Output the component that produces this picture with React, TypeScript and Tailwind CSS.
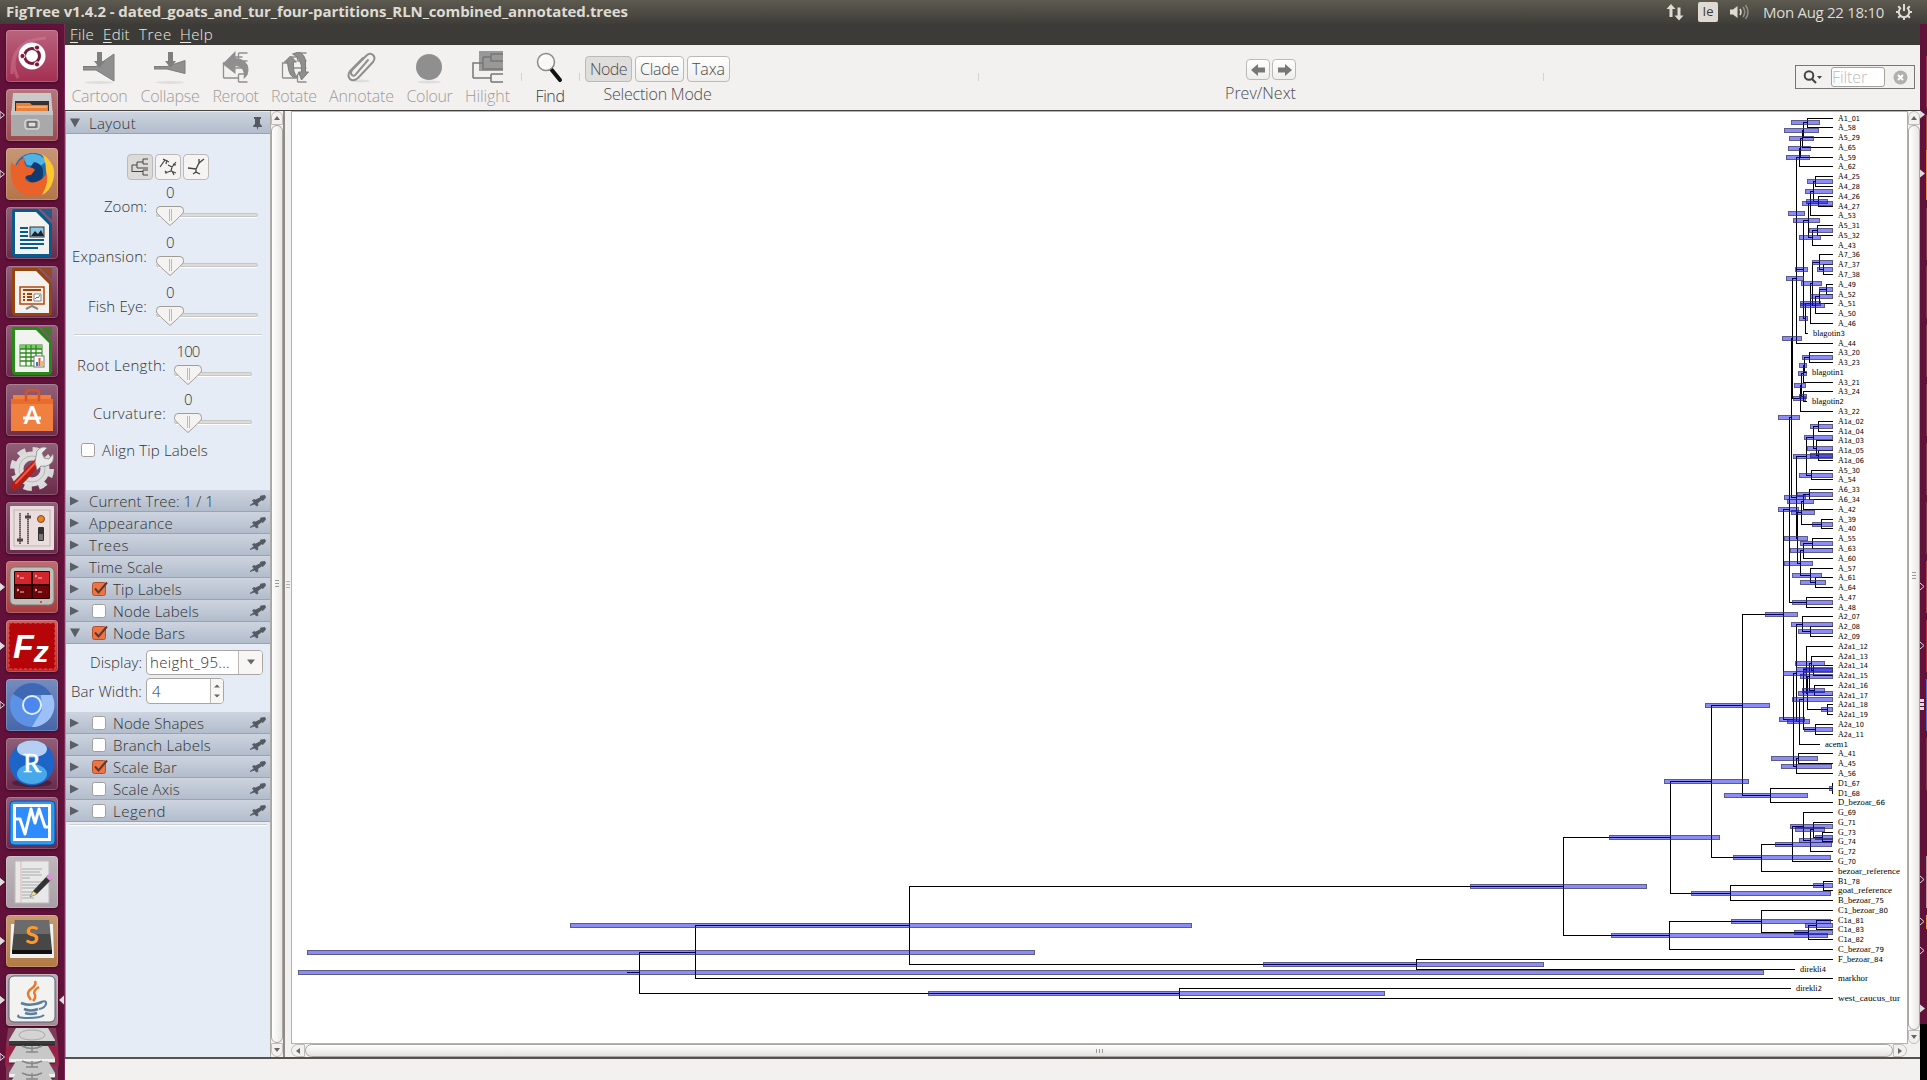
import { useLayoutEffect, useRef, type ReactNode } from "react";

/* Text spread over a fixed width by adjusting its letter spacing. */
function Fit({ w, children, className = "" }: { w: number; children: string; className?: string }) {
  const ref = useRef<HTMLSpanElement>(null);
  useLayoutEffect(() => {
    const el = ref.current;
    if (!el) return;
    el.style.letterSpacing = "0px";
    const natural = el.getBoundingClientRect().width;
    el.style.letterSpacing = `${(w - natural) / children.length}px`;
  }, [w, children]);
  return (
    <span ref={ref} className={`inline-block whitespace-pre ${className}`}>
      {children}
    </span>
  );
}

/* ---------- phylogenetic tree ---------- */

type Clade = string | [number, number, number, Clade, Clade];

const goats: Clade = [1742, 1705, 1770,
  [1783, 1765, 1798,
    [1789, 1778, 1799,
      [1791, 1778, 1800,
        [1792, 1782, 1802,
          [1796, 1786, 1804,
            [1796, 1788, 1805,
              [1799, 1786, 1810,
                [1800, 1788, 1811,
                  [1802, 1789, 1814, [1803, 1784, 1819, [1807, 1791, 1820, "A1_01", "A_58"], "A5_29"], "A_65"],
                  "A_59"],
                "A_62"],
              [1803, 1795, 1808,
                [1808, 1793, 1820,
                  [1810, 1802, 1833,
                    [1813, 1805, 1833, [1815, 1807, 1833, "A4_25", "A4_28"], [1818, 1806, 1828, "A4_26", "A4_27"]],
                    "A_53"],
                  [1812, 1799, 1821, [1817, 1809, 1833, "A5_31", "A5_32"], "A_43"]],
                [1805, 1799, 1808,
                  [1810, 1800, 1821,
                    [1812, 1801, 1822,
                      [1819, 1812, 1833, "A7_36", [1823, 1817, 1833, "A7_37", "A7_38"]],
                      [1815, 1800, 1825,
                        [1819, 1810, 1833, [1826, 1819, 1833, "A_49", "A_52"], "A_51"],
                        "A_50"]],
                    "A_46"],
                  "blagotin3"]]],
            "A_44"],
          [1800, 1793, 1806,
            [1801, 1794, 1806,
              [1803, 1798, 1807, [1804, 1799, 1807, [1809, 1802, 1833, "A3_20", "A3_23"], "blagotin1"], "A3_21"],
              [1803, 1799, 1807, "A3_24", "blagotin2"]],
            "A3_22"]],
        [1796, 1784, 1806,
          [1806, 1793, 1833,
            [1813, 1804, 1833,
              [1818, 1810, 1833, "A1a_02", "A1a_04"],
              [1816, 1807, 1833, "A1a_03", [1818, 1810, 1833, "A1a_05", "A1a_06"]]],
            [1811, 1799, 1833, "A5_30", "A_54"]],
          [1797, 1784, 1808,
            [1801, 1791, 1815,
              [1803, 1787, 1814, [1809, 1797, 1833, "A6_33", "A6_34"], "A_42"],
              [1821, 1812, 1833, "A_39", "A_40"]],
            [1800, 1784, 1813,
              [1803, 1790, 1833, [1812, 1800, 1833, "A_55", "A_63"], "A_60"],
              [1810, 1792, 1822, "A_57", [1815, 1800, 1826, "A_61", "A_64"]]]]]],
      [1806, 1792, 1833, "A_47", "A_48"]],
    [1793, 1779, 1805,
      [1796, 1783, 1807,
        [1802, 1791, 1833, "A2_07", [1810, 1798, 1833, "A2_08", "A2_09"]],
        [1799, 1787, 1810,
          [1803, 1792, 1833,
            [1806, 1796, 1833,
              "A2a1_12",
              [1807, 1798, 1833,
                [1809, 1800, 1833,
                  [1811, 1795, 1825, "A2a1_13", [1813, 1803, 1833, "A2a1_14", "A2a1_15"]],
                  [1814, 1802, 1825, "A2a1_16", "A2a1_17"]],
                [1827, 1821, 1833, "A2a1_18", "A2a1_19"]]],
            [1815, 1804, 1833, "A2a_10", "A2a_11"]],
          "acem1"]],
      [1796, 1781, 1832, [1798, 1771, 1818, "A_41", "A_45"], "A_56"]]],
  [1770, 1724, 1808, [1832, 1829, 1833, "D1_67", "D1_68"], "D_bezoar_66"]];

const bezoars: Clade = [1563, 1470, 1647,
  [1670, 1609, 1720,
    [1711, 1664, 1749,
      goats,
      [1761, 1733, 1831,
        [1792, 1775, 1832,
          [1803, 1790, 1833,
            "G_69",
            [1810, 1799, 1833, [1813, 1795, 1825, "G_71", [1822, 1815, 1833, "G_73", "G_74"]], "G_72"]],
          "G_70"],
        "bezoar_reference"]],
    [1730, 1691, 1831, [1823, 1813, 1833, "B1_78", "goat_reference"], "B_bezoar_75"]],
  [1669, 1611, 1828,
    [1761, 1731, 1831,
      "C1_bezoar_80",
      [1808, 1794, 1833, [1816, 1805, 1833, "C1a_81", "C1a_83"], "C1a_82"]],
    "C_bezoar_79"]];

const root: Clade = [639, 298, 1764,
  [695, 307, 1035,
    [909, 570, 1192, bezoars, [1416, 1263, 1544, "F_bezoar_84", "direkli4"]],
    "markhor"],
  [1179, 928, 1385, "direkli2", "west_caucus_tur"]];

const tipX: Record<string, number> = {
  blagotin1: 1807, blagotin2: 1807, blagotin3: 1808, acem1: 1820, direkli4: 1795, direkli2: 1791,
};

const labelWidth: Record<string, number> = {
  D_bezoar_66: 47, bezoar_reference: 62, goat_reference: 54, B_bezoar_75: 46, C_bezoar_79: 46, F_bezoar_84: 45,
  C1_bezoar_80: 50, markhor: 30, direkli4: 26, direkli2: 26, west_caucus_tur: 62, blagotin1: 32, blagotin2: 32,
  blagotin3: 32, acem1: 23,
};
const widthByLength = [0, 0, 0, 0, 18, 22, 26, 30];

function TreeDrawing() {
  const lines: [number, number, number, number][] = [];
  const bars: [number, number, number][] = [];
  const tips: [string, number, number][] = [];
  const walk = (c: Clade, from: number): number => {
    if (typeof c === "string") {
      const y = 118.05 + 9.782 * tips.length;
      const end = tipX[c] ?? 1833;
      tips.push([c, end + 5, Math.floor(y)]);
      lines.push([from, Math.floor(y), end - from, 1]);
      return y;
    }
    const [x, b1, b2, top, bottom] = c;
    const y1 = walk(top, x);
    const y2 = walk(bottom, x);
    const y = (y1 + y2) / 2;
    lines.push([x, Math.floor(y1), 1, Math.floor(y2) - Math.floor(y1) + 1]);
    lines.push([from, Math.floor(y), x - from, 1]);
    bars.push([b1, b2, Math.floor(y)]);
    return y;
  };
  walk(root, 627);
  return (
    <svg width="1615" height="931" viewBox="292 112 1615 931" className="block">
      {lines.map(([x, y, w, h], i) => (
        <rect key={i} x={x} y={y} width={w} height={h} fill="#000" shapeRendering="crispEdges" />
      ))}
      {bars.map(([a, b, y], i) => (
        <g key={i}>
          <rect x={a} y={y - 2} width={b - a} height="5" fill="#0000eb" fillOpacity=".45" />
          <rect x={a + 0.5} y={y - 1.5} width={b - a - 1} height="4" fill="none" stroke="#3c3c3c" strokeOpacity=".6" />
        </g>
      ))}
      {tips.map(([t, x, y]) => (
        <text key={t} x={x} y={y + 3} textLength={labelWidth[t] ?? widthByLength[t.length]}
          lengthAdjust="spacingAndGlyphs" fontSize="8.5" fontFamily="'Liberation Serif', serif" fill="#000">
          {t.split(/(\d+)/).map((part, i) =>
            /\d/.test(part)
              ? <tspan key={i} fontFamily="'DejaVu Sans', sans-serif" fontSize="7">{part}</tspan>
              : part,
          )}
        </text>
      ))}
    </svg>
  );
}

/* ---------- launcher ---------- */

function Doc({ color, children }: { color: string; children: ReactNode }) {
  return (
    <g>
      <path d="M8 2h24l14 15v29a4 4 0 0 1-4 4H10a4 4 0 0 1-4-4V4a2 2 0 0 1 2-2z" fill={color} />
      <path d="M9 5h21l13 13v29H9z" fill="#f2f2f0" />
      <path d="M34 2h12v11z" fill={color} opacity=".75" />
      {children}
    </g>
  );
}

const launcher: { bg: string; mark?: "open" | "full"; active?: boolean; art: ReactNode }[] = [
  { bg: "bg-[#a33052]", art: (
    <g>
      <path d="M6 44Q4 10 40 8M12 48Q0 24 24 10" fill="none" stroke="#d98aa0" strokeWidth="3" opacity=".4" />
      <circle cx="26" cy="26" r="13.5" fill="#fff" />
      <circle cx="26" cy="26" r="7.5" fill="none" stroke="#7c1a3a" strokeWidth="3" />
      <circle cx="16.500" cy="26" r="2.600" fill="#7c1a3a" stroke="#fff" />
      <circle cx="31" cy="17.600" r="2.600" fill="#7c1a3a" stroke="#fff" />
      <circle cx="31" cy="34.400" r="2.600" fill="#7c1a3a" stroke="#fff" />
    </g>) },
  { bg: "bg-[#9c4a50]", mark: "open", art: (
    <g>
      <path d="M7 4h38l2 24H5z" fill="#c9c9c9" />
      <path d="M9 12h34v12H9z" fill="#3a3030" />
      <path d="M10 14h14l2 2h16v6H10z" fill="#e87f3a" />
      <path d="M11 18h30" stroke="#f8d8a0" />
      <path d="M5 22h42v25H5z" fill="#a9a9a9" />
      <path d="M5 22h42v4H5z" fill="#c4c4c4" />
      <rect x="19" y="31" width="14" height="9" rx="2" fill="#a0a0a0" stroke="#eee" />
      <rect x="22" y="33" width="8" height="5" fill="#ddd" stroke="#444" />
    </g>) },
  { bg: "bg-[#b5744a]", mark: "open", art: (
    <g>
      <circle cx="27" cy="24" r="19" fill="#1f6fb5" />
      <path d="M17 9q12-8 24 4l-8 6-12-2z" fill="#4fb3e6" />
      <path d="M28 14q12 2 8 18l-10 4-8-8z" fill="#123a72" />
      <path d="M5 14q3 4 6 3 2-6 8-7-2 6 2 9 6 0 8 3l-4 5q-6 0-6 4 6 7 17 0 9-8 3-22 9 5 9 16a21 21 0 0 1-43 3Q4 20 5 14z" fill="#e8622a" />
      <path d="M36 6q16 10 11 27-3 10-11 14 8-14 4-24 0-10-4-17z" fill="#fbc62f" />
    </g>) },
  { bg: "bg-[#6b2a4b]", art: (
    <Doc color="#0b5a8c">
      <rect x="24" y="20" width="14" height="10" fill="#8cc7ea" stroke="#333" />
      <path d="M25 29l4-5 3 3 3-4 3 6z" fill="#222" />
      <path d="M14 21h8M14 25h8M14 29h8M14 33h24M14 37h24M14 41h18" stroke="#0b5a8c" strokeWidth="2" />
    </Doc>) },
  { bg: "bg-[#6b2a4b]", art: (
    <Doc color="#96450f">
      <rect x="14" y="21" width="24" height="17" fill="#fbe9dc" stroke="#b04a10" strokeWidth="1.500" />
      <path d="M17 24h18M17 28h2M21 28h5M17 31h2M21 31h5M17 34h2M21 34h5" stroke="#96450f" strokeWidth="2" />
      <path d="M28 28h7v7h-7z" fill="#fff" stroke="#888" />
      <path d="M29 33l2-2 1 1 2-3" stroke="#3a9a3a" fill="none" />
      <path d="M26 38v2l-6 3M26 40l6 3" stroke="#888" strokeWidth="2" fill="none" />
    </Doc>) },
  { bg: "bg-[#6b2a4b]", art: (
    <Doc color="#258a16">
      <rect x="14" y="20" width="22" height="21" fill="#fff" stroke="#2a8a1a" />
      <path d="M14 20h22v4H14z" fill="#7cc86a" />
      <path d="M14 24h22M14 28h22M14 32h22M14 36h22M20 20v21M25 20v21M30 20v21" stroke="#2a8a1a" strokeWidth="1.300" />
      <rect x="28" y="31" width="10" height="11" fill="#fff" stroke="#777" />
      <path d="M31 37v4" stroke="#2a7ad0" strokeWidth="2" /><path d="M33.500 33v8" stroke="#e05a1a" strokeWidth="2" /><path d="M36 36v5" stroke="#f0a030" strokeWidth="1.500" />
    </Doc>) },
  { bg: "bg-[#6f2d4c]", art: (
    <g>
      <path d="M7 11h38v4h2v32H5V15h2z" fill="#f08040" />
      <path d="M5 15h42v5H5z" fill="#e86c2c" />
      <path d="M20 17V10q0-4 4-4h5q4 0 4 4v7" fill="none" stroke="#d0552a" strokeWidth="2.500" />
      <text x="26" y="40" textAnchor="middle" fontSize="24" fontWeight="700" fontFamily="Lato, sans-serif" fill="#fff">A</text>
      <path d="M17 34h18" stroke="#fff" strokeWidth="3" />
    </g>) },
  { bg: "bg-[#6b2a4b]", art: (
    <g>
      <circle cx="26" cy="26" r="18" fill="none" stroke="#d8d8d8" strokeWidth="8" strokeDasharray="7.500 6.640" />
      <circle cx="26" cy="26" r="13" fill="none" stroke="#dcdcdc" strokeWidth="9" />
      <circle cx="26" cy="26" r="13" fill="none" stroke="#b9b9b9" />
      <path d="M9 43L32 19" stroke="#b51d17" strokeWidth="8" strokeLinecap="round" />
      <path d="M10 40L30 19" stroke="#ef5b4a" strokeWidth="2" strokeLinecap="round" />
      <path d="M29 19l2-11q5-6 10-3l-5 5 2 5 5 1 4-5q2 7-4 11-4 2-8 1l-4 4z" fill="#e8e8e8" stroke="#888" strokeWidth=".8" />
    </g>) },
  { bg: "bg-[#6b2a4b]", art: (
    <g>
      <rect x="4" y="4" width="44" height="44" rx="1" fill="#e9dedd" />
      <rect x="8" y="8" width="36" height="36" fill="none" stroke="#c4b2b2" />
      <path d="M14 11v31M22 11v31" stroke="#877" strokeWidth="2" strokeDasharray="1 1" />
      <path d="M14 11v31M22 11v31" stroke="#544" />
      <path d="M11 38h6M19 15h6" stroke="#544" strokeWidth="3" />
      <circle cx="35" cy="17" r="3.500" fill="#f08020" stroke="#7a4a30" />
      <rect x="32" y="25" width="6" height="14" rx="1" fill="#333" /><rect x="33" y="32" width="4" height="6" fill="#777" />
    </g>) },
  { bg: "bg-[#a83c40]", mark: "full", art: (
    <g>
      <rect x="4" y="6" width="44" height="38" rx="5" fill="#bfc0bb" stroke="#777" />
      <rect x="8" y="10" width="36" height="28" rx="1" fill="#2a0505" />
      <path d="M9 11h16v12H9zM27 11h16v12H27z" fill="#d3262c" />
      <path d="M9 25h16v12H9zM27 25h16v12H27z" fill="#6e0508" />
      <path d="M11 14l2 1-2 1M14 17h4M29 14l2 1-2 1M32 17h4M11 28l2 1-2 1M14 31h4M29 28l2 1-2 1M32 31h4" stroke="#fdd" fill="none" strokeWidth=".9" />
      <circle cx="35" cy="41" r="1" fill="#e22" />
    </g>) },
  { bg: "bg-[#b82a2c]", mark: "full", art: (
    <g>
      <rect x="3" y="3" width="46" height="46" fill="#b50508" stroke="#d55" strokeDasharray="3 2" />
      <text x="7" y="38" fontWeight="700" fontStyle="italic" fontFamily="'Liberation Sans', sans-serif" fill="#fff">
        <tspan fontSize="34">F</tspan><tspan fontSize="30" dy="4">z</tspan>
      </text>
    </g>) },
  { bg: "bg-[#4766a8]", mark: "open", art: (
    <g>
      <circle cx="26" cy="26" r="22" fill="#5c92e6" />
      <path d="M26 26L7 15A22 22 0 0 1 45 15L45 16H26z" fill="#3f68b4" />
      <path d="M35 16h11a22 22 0 0 1-20 32L36 31z" fill="#9cc0f8" />
      <circle cx="26" cy="26" r="10" fill="#e4eefe" />
      <circle cx="26" cy="26" r="8" fill="#4a87ee" />
    </g>) },
  { bg: "bg-[#6b2a4b]", art: (
    <g>
      <ellipse cx="26" cy="45" rx="20" ry="4" fill="#2a1030" opacity=".5" />
      <circle cx="26" cy="25" r="22.500" fill="#1d66c8" />
      <ellipse cx="26" cy="36" rx="15" ry="10" fill="#55c0f4" opacity=".75" />
      <ellipse cx="26" cy="11" rx="15" ry="8.500" fill="#cfe2f8" opacity=".85" />
      <text x="26" y="34" textAnchor="middle" fontSize="27" fontFamily="'Liberation Serif', serif" fill="#fff" stroke="#fff" strokeWidth=".6">R</text>
    </g>) },
  { bg: "bg-[#6b2a4b]", art: (
    <g>
      <rect x="4" y="4" width="45" height="44" rx="4" fill="#2a9df0" stroke="#0a4ab4" />
      <rect x="8.500" y="8.500" width="35" height="34" fill="#2f8cff" stroke="#fff" strokeWidth="3" />
      <path d="M8 22h6l5 15 6-25 4 14 4-14 6 18h6" fill="none" stroke="#fff" strokeWidth="3" strokeLinejoin="round" />
    </g>) },
  { bg: "bg-[#aa9fa6]", mark: "full", art: (
    <g>
      <rect x="9" y="5" width="34" height="42" fill="#e8e8e8" stroke="#bbb" />
      <path d="M15 5v42" stroke="#e9b0b0" />
      <path d="M16 13h20M16 16h18M16 19h20M16 22h8M16 26h20M16 29h20M16 32h14M16 36h16M16 39h10M16 42h12" stroke="#aaa" />
      <path d="M27 35L42 19l4 4L31 38z" fill="#333" />
      <path d="M40 21l4-4 4 4-4 4z" fill="#d795d5" /><path d="M24 41l3-6 4 3z" fill="#f0e090" stroke="#555" strokeWidth=".5" />
    </g>) },
  { bg: "bg-[#b27a45]", mark: "full", art: (
    <g>
      <path d="M5 9h42l1 34H4z" fill="#f2f2f2" />
      <path d="M9 5h34l3 30q0 4-3 4H9q-3 0-3-4z" fill="#474747" />
      <path d="M9 5h34l1 14H8z" fill="#7a7a7a" opacity=".7" /><path d="M6 35h40v4H6z" fill="#111" />
      <text x="26" y="29" textAnchor="middle" fontSize="25" fontWeight="700" fontFamily="Lato, sans-serif" fill="#ff9a2a">S</text>
    </g>) },
  { bg: "bg-[#a98a92]", mark: "full", active: true, art: (
    <g>
      <rect x="3" y="2" width="46" height="46" rx="5" fill="#f2f2f0" stroke="#4e647c" />
      <path d="M29 7q2 4-4 8t0 11M33 13q-7 4-4 8 1 3-2 6" fill="none" stroke="#e8792c" strokeWidth="2.500" />
      <path d="M15 29q10 4 21-1M18 35q7 3 14 0M19 39q6 2 12 0" fill="none" stroke="#5a7f9e" strokeWidth="2.500" />
      <path d="M35 28q6-2 5 2t-7 5M13 41q-4 3 9 3t16-3" fill="none" stroke="#5a7f9e" strokeWidth="2" />
    </g>) },
];

function Launcher() {
  return (
    <aside className="relative h-[1056px] w-[65px] shrink-0 overflow-hidden border-r border-[#7d2c58] bg-[#62113a] pt-[6px]">
      <div className="flex flex-col gap-[7px]">
        {launcher.map((it, i) => (
          <div key={i} className="flex h-[52px] shrink-0 items-center">
            <svg width="6" height="12" viewBox="0 0 6 12" className="shrink-0">
              {it.mark && <path d="M0 2.500L4.500 6 0 9.500z" fill={it.mark === "full" ? "#ddd" : "none"} stroke="#ddd" />}
            </svg>
            <div className={`h-[52px] w-[52px] rounded-[4px] bg-linear-to-b from-white/25 to-transparent shadow-[inset_0_0_0_1px_rgba(255,255,255,.2),0_1px_3px_rgba(0,0,0,.4)] ${it.bg}`}>
              <svg width="52" height="52" viewBox="0 0 52 52">{it.art}</svg>
            </div>
            {it.active && (
              <svg width="6" height="12" viewBox="0 0 6 12"><path d="M6 1.500L1 6l5 4.500z" fill="#ddd" /></svg>
            )}
          </div>
        ))}
      </div>
      <svg width="64" height="54" viewBox="0 1026 64 54" className="block">
        <path d="M8 1028h48l2 18H6z" fill="#7d3b58" />
        <path d="M6 1046h52l1 20H5z" fill="#9a2448" />
        <path d="M6 1066h52v14H6z" fill="#7d3b58" />
        {[1028, 1046, 1061, 1073].map((y, i) => (
          <g key={y}>
            <path d={`M16 ${y}h32l7 12v5H9v-5z`} fill={i ? "#c8c8c8" : "#d4d4d4"} />
            <path d={`M9 ${y + 13}h46v4H9z`} fill={i ? "#f0f0f0" : "#3a3a3a"} />
            {i === 0 ? <ellipse cx="32" cy={y + 7} rx="13" ry="5" fill="none" stroke="#aaa" /> : <path d={`M32 ${y}v6M26 ${y + 6}h12M22 ${y}q10 5 20 0`} stroke="#888" fill="none" strokeWidth="1.500" />}
            <path d={`M9 ${y + 17}h46`} stroke="#222" />
          </g>
        ))}
        <path d="M0 1053.500l4.500 3.500-4.500 3.500z" fill="none" stroke="#ddd" />
      </svg>
    </aside>
  );
}

/* Slice of the launcher that belongs to the next monitor. */
function NextMonitor() {
  const edge = [[56, 52, "#a33052"], [115, 52, "#b05030"], [150, 50, "#f08a30"], [208, 52, "#7d3b58"], [266, 52, "#7d3b58"], [325, 52, "#7d3b58"], [384, 52, "#7d3b58"], [443, 52, "#7d3b58"], [502, 52, "#7d3b58"], [561, 52, "#b84448"], [620, 52, "#c03034"], [679, 52, "#4a74d0"], [738, 52, "#7d3b58"], [856, 52, "#aa9fa6"], [915, 14, "#e8a040"]] as [number, number, string][];
  return (
    <svg width="7" height="1056" viewBox="0 24 7 1056" className="shrink-0">
      <rect y="24" width="7" height="1000" fill="#62113a" />
      <rect y="1024" width="7" height="56" fill="#000" />
      {edge.map(([y, h, c]) => <rect key={y} x="6" y={y} width="1" height={h} fill={c} />)}
      {[114.500, 173.500, 1008.500].map((y) => <path key={y} d={`M0 ${y - 4}L5 ${y}L0 ${y + 4}z`} fill="#ddd" />)}
      {[586.500, 645.500, 879.500, 921.500, 950.500].map((y) => <path key={y} d={`M0 ${y - 3.5}L4 ${y}L0 ${y + 3.5}`} fill="none" stroke="#ddd" />)}
      {[700, 704, 708].map((y) => <path key={y} d={`M0 ${y - 1}h4v3h-4z`} fill="#ddd" />)}
    </svg>
  );
}

/* ---------- toolbar ---------- */

const G = "#8f8f8f";
const branches = <path d="M3 27V12h9M3 27h15M12 6v11M12 6h10M18 2v8M18 2h9M18 10h9M12 17h15M18 23v8M18 23h9M18 31h9" fill="none" stroke={G} strokeWidth="1.300" />;

const tools: { name: string; box: string; w: number; icon: ReactNode }[] = [
  { name: "Cartoon", box: "w-[69px]", w: 56, icon: (
    <g><path d="M0 15.500h13L31 3v27L13 19H0z" fill={G} stroke="#7c7c7c" /><path d="M14 1h5v9h3l-5.500 7-5.500-7h3z" fill="#7f7f7f" /><ellipse cx="16" cy="31.500" rx="14" ry="1.500" fill="#dedede" /></g>) },
  { name: "Collapse", box: "w-[72px]", w: 59, icon: (
    <g><path d="M0 15.500h13L31 9.500v13L13 18H0z" fill={G} stroke="#7c7c7c" /><path d="M14 1h5v9h3l-5.500 7-5.500-7h3z" fill="#7f7f7f" /><ellipse cx="16" cy="31.500" rx="14" ry="1.500" fill="#dedede" /></g>) },
  { name: "Reroot", box: "w-[59px]", w: 46, icon: (
    <g transform="translate(1.500 0)">{branches}<path d="M2 13L15 0v7q12 1 13 11 0 7-5 10 2-12-8-13v8z" fill={G} /></g>) },
  { name: "Rotate", box: "w-[58px]", w: 46, icon: (
    <g transform="translate(1.500 0)">{branches}<path d="M5 11l6-6 6 6h-3q-1 11 4 15-9 3-10-15z" fill={G} stroke="#7d7d7d" /><path d="M13 3q10-5 13 6v12h3l-7 8-3-8h3Q23 7 13 3z" fill={G} stroke="#7d7d7d" /></g>) },
  { name: "Annotate", box: "w-[77px]", w: 65, icon: (
    <g><ellipse cx="16" cy="30" rx="9" ry="1.500" fill="#dedede" /><path d="M23 9L11 23q-2 3-4 1t0-5L21 5q4-4 7-1t0 7L13 27q-5 4-8 1t0-8L18 7" fill="none" stroke={G} strokeWidth="2" strokeLinecap="round" /></g>) },
  { name: "Colour", box: "w-[59px]", w: 46, icon: <g><ellipse cx="16" cy="31" rx="12" ry="1.500" fill="#dedede" /><circle cx="16" cy="16" r="13" fill={G} /></g> },
  { name: "Hilight", box: "w-[57px]", w: 45, icon: (
    <g><path d="M8 0h24v20H8z" fill="#999" /><path d="M2 27V12h10M12 6v12h20M12 6h8v4h12M2 27h18M20 6V3h12M20 23v8M20 23h12M20 31h12" fill="none" stroke="#777" strokeWidth="1.500" /></g>) },
];

const button = "flex items-center justify-center rounded-[4px] border border-[#bdbab5] text-[16px] leading-none text-[#4c4c4c]";
const raised = "bg-linear-to-b from-white to-[#efeeed]";

function Toolbar() {
  return (
    <div className="flex h-[66px] items-start border-b border-[#45433f] bg-[#f2f1f0] font-light text-[#4c4c4c]">
      <div className="flex">
        {tools.map((t) => (
          <div key={t.name} className={`flex flex-col items-center pt-[6px] text-[#9d9b98] ${t.box}`}>
            <svg width="33" height="33" viewBox="0 0 33 33">{t.icon}</svg>
            <Fit w={t.w} className="mt-[2px] text-[16px] leading-[20px]">{t.name}</Fit>
          </div>
        ))}
      </div>
      <div className="mt-[28px] ml-[5px] h-[8px] w-px bg-[#d5d3d0]" />
      <div className="ml-[6px] flex w-[44px] flex-col items-center pt-[6px]">
        <svg width="33" height="33" viewBox="0 0 33 33">
          <path d="M17 18l9 11" stroke="#111" strokeWidth="4" strokeLinecap="round" />
          <circle cx="12" cy="11" r="8.500" fill="#f8f8f8" stroke="#8a8a8a" strokeWidth="1.500" />
          <path d="M7 10q1-5 6-5" stroke="#fff" strokeWidth="2" fill="none" />
        </svg>
        <Fit w={29} className="mt-[2px] text-[16px] leading-[20px] text-[#3a3a3a]">Find</Fit>
      </div>
      <div className="mt-[28px] ml-[7px] h-[8px] w-px bg-[#d5d3d0]" />
      <div className="ml-[5px] flex w-[145px] flex-col items-center pt-[11px]">
        <div className="flex gap-[3px]">
          <div className={`${button} h-[26px] w-[47px] bg-[#e0dedc]`}><Fit w={37}>Node</Fit></div>
          <div className={`${button} ${raised} h-[26px] w-[49px]`}><Fit w={39}>Clade</Fit></div>
          <div className={`${button} ${raised} h-[26px] w-[43px]`}><Fit w={33}>Taxa</Fit></div>
        </div>
        <Fit w={108} className="mt-[2px] text-[16px] leading-[20px]">Selection Mode</Fit>
      </div>
      <div className="mt-[28px] ml-[248px] h-[8px] w-px bg-[#d5d3d0]" />
      <div className="ml-[245px] flex w-[72px] flex-col items-end pt-[14px]">
        <div className="flex gap-[2px]">
          <div className={`${button} ${raised} h-[21px] w-[24px]`}>
            <svg width="15" height="12" viewBox="0 0 15 12"><path d="M0 6l7-6v3.500h7v5H7V12z" fill="#777" /></svg>
          </div>
          <div className={`${button} ${raised} h-[21px] w-[24px]`}>
            <svg width="15" height="12" viewBox="0 0 15 12"><path d="M15 6L8 0v3.500H1v5h7V12z" fill="#777" /></svg>
          </div>
        </div>
        <Fit w={71} className="mt-[3px] text-[16px] leading-[20px]">Prev/Next</Fit>
      </div>
      <div className="mt-[28px] ml-[247px] h-[8px] w-px bg-[#d5d3d0]" />
      <div className="mt-[20px] mr-[5px] ml-auto flex h-[24px] w-[120px] items-center border border-[#777] pl-[7px]">
        <svg width="20" height="16" viewBox="0 0 20 16">
          <circle cx="6" cy="6.500" r="4.300" fill="none" stroke="#444" strokeWidth="2" />
          <path d="M9 10l4 4" stroke="#444" strokeWidth="2.200" /><path d="M14 7h5l-2.500 3z" fill="#444" />
        </svg>
        <div className="ml-[8px] flex h-[20px] w-[54px] items-center rounded-[3px] border border-[#a5a29d] bg-white text-[16px] text-[#bbb]">
          <Fit w={35}>Filter</Fit>
        </div>
        <svg width="15" height="15" viewBox="0 0 15 15" className="ml-[8px]">
          <circle cx="7.500" cy="7.500" r="7" fill="#b0b0b0" /><path d="M5 5l5 5M10 5l-5 5" stroke="#fff" strokeWidth="2" />
        </svg>
      </div>
    </div>
  );
}

/* ---------- side panel ---------- */

function Pin({ upright }: { upright?: boolean }) {
  return (
    <svg width="17" height="16" viewBox="-8.500 -8 17 16" className="shrink-0">
      {upright ? (
        <path d="M-3.500-6h7v2H2.500v5Q4.500 2 4.500 4H.8L0 7l-.8-3h-3.700q0-2 2-3v-5h-1z" fill="#555a62" />
      ) : (
        <path d="M-7.500 4.500l4-3L-5-.5-3.500-1.500l1.500.5L3-3.500 3-5l4.500-.5.5 2L5.500-.5 4-1 0 2l.5 2.500-1.500.5-2-2z" fill="#555a62" stroke="#555a62" strokeWidth=".8" />
      )}
    </svg>
  );
}

function Check({ on }: { on?: boolean }) {
  return (
    <svg width="17" height="16" viewBox="0 0 17 16" className="shrink-0">
      <rect x=".500" y="1.500" width="13" height="13" rx="2" fill={on ? "#ee7444" : "#fff"} stroke={on ? "#b0522e" : "#a29e99"} />
      {on && <path d="M3 7.500l3.500 4L15 1.500" fill="none" stroke="#5a3a30" strokeWidth="2" />}
    </svg>
  );
}

function Header({ title, w, open, check, upright }: { title: string; w: number; open?: boolean; check?: boolean; upright?: boolean }) {
  return (
    <div className="flex h-[22px] shrink-0 items-center border-b border-[#98a3b8] bg-linear-to-b from-[#cdd4e0] to-[#b2bccb] pr-[4px] pl-[4px]">
      <svg width="10" height="10" viewBox="0 0 10 10" className="shrink-0">
        <path d={open ? "M0 .5h10L5 9.500z" : "M0 .5v9L9 5z"} fill="#5a5f66" />
      </svg>
      {check === undefined ? <div className="w-[9px]" /> : <div className="ml-[12px] w-[21px]"><Check on={check} /></div>}
      <Fit w={w} className="leading-[20px]">{title}</Fit>
      <div className="ml-auto"><Pin upright={upright} /></div>
    </div>
  );
}

function SliderRow({ label, w, value, vw, root: isRoot }: { label: string; w: number; value: string; vw: number; root?: boolean }) {
  return (
    <div className={`flex ${isRoot ? "h-[48px]" : "h-[50px]"}`}>
      <div className={`flex shrink-0 justify-end pt-[12px] ${isRoot ? "w-[100px]" : "w-[81px]"}`}>
        <Fit w={w} className="leading-[20px]">{label}</Fit>
      </div>
      <div className={`${isRoot ? "ml-[8px] w-[79px]" : "ml-[9px] w-[103px]"}`}>
        <div className="flex h-[22px] w-[28px] items-start justify-center">
          <Fit w={vw} className="text-[15px] leading-[17px]">{value}</Fit>
        </div>
        <svg width="103" height="21" viewBox="0 0 103 21" className="block overflow-visible">
          <rect x=".500" y="7.500" width={isRoot ? 77 : 101} height="3" rx="1.500" fill="#dedcda" stroke="#c8c6c4" />
          <path d={isRoot ? "M2 11.500h75" : "M2 11.500h99"} stroke="#fff" />
          <path d="M4 .5h20q3.500 0 3.500 4v1.500Q27 8 14 19.500 1 8 .5 6V4.500q0-4 3.500-4z" fill="#f4f3f2" stroke="#a09d99" />
          <path d="M13.500 3v12M15.500 3v12" stroke="#bbb" />
        </svg>
      </div>
    </div>
  );
}

function SidePanel() {
  const mode = "flex h-[26px] w-[26px] items-center justify-center rounded-[4px] border border-[#bdbab5]";
  return (
    <div className="flex w-[205px] shrink-0 flex-col border-l border-[#8f9cae] bg-[#e5ecf6] pt-px text-[15px] font-light text-[#333]">
      <Header title="Layout" w={47} open upright />
      <div className="h-[356px]">
        <div className="flex gap-[2px] pt-[20px] pb-[4px] pl-[61px]">
          <div className={`${mode} bg-[#dddbd9]`}>
            <svg width="18" height="18" viewBox="0 0 18 18"><path d="M1 14V7h5M6 4v6h11M6 4h6M12 1v5M12 1h5M12 6h5M1 13.500h11M12 12v5M12 12h5M12 17h5" fill="none" stroke="#444" /></svg>
          </div>
          <div className={`${mode} bg-[#f5f4f3]`}>
            <svg width="18" height="18" viewBox="0 0 18 18"><path d="M1 9l5-7 4 2M4 1l2 1M8 2l-1 4M9 7l4 2 4-5M14 6l3 1M13 9l-1 4 5 2M12 13l-6 2M8 15l-2-2M13 13l2 4" fill="none" stroke="#444" strokeWidth="1.200" /></svg>
          </div>
          <div className={`${mode} bg-[#f5f4f3]`}>
            <svg width="18" height="18" viewBox="0 0 18 18"><path d="M1 10l8 1 3-6 5-4M12 6V1M9 11v3l4 2M9 14l-3 2" fill="none" stroke="#444" strokeWidth="1.300" /></svg>
          </div>
        </div>
        <SliderRow label="Zoom:" w={43} value="0" vw={8} />
        <SliderRow label="Expansion:" w={75} value="0" vw={8} />
        <SliderRow label="Fish Eye:" w={59} value="0" vw={8} />
        <div className="mx-[8px] mb-[7px] h-[2px] border-t border-[#cfcfd2] bg-white" />
        <SliderRow label="Root Length:" w={89} value="100" vw={23} root />
        <SliderRow label="Curvature:" w={73} value="0" vw={8} root />
        <div className="-mt-px flex h-[24px] items-center pl-[15px]">
          <Check />
          <Fit w={106} className="ml-[4px] leading-[20px]">Align Tip Labels</Fit>
        </div>
      </div>
      <Header title="Current Tree: 1 / 1" w={125} />
      <Header title="Appearance" w={84} />
      <Header title="Trees" w={40} />
      <Header title="Time Scale" w={74} />
      <Header title="Tip Labels" w={69} check />
      <Header title="Node Labels" w={86} check={false} />
      <Header title="Node Bars" w={72} open check />
      <div className="flex h-[68px] flex-col gap-[3px] pt-[5px]">
        <div className="flex h-[26px] items-center">
          <div className="flex w-[76px] justify-end"><Fit w={52}>Display:</Fit></div>
          <div className="ml-[4px] flex h-[25px] w-[117px] rounded-[4px] border border-[#aaa7a2] bg-white">
            <div className="flex w-[91px] items-center pl-[3px]"><Fit w={80}>height_95...</Fit></div>
            <div className="flex flex-1 items-center justify-center rounded-r-[3px] border-l border-[#bbb8b4] bg-[#f7f6f5]">
              <svg width="8" height="6" viewBox="0 0 8 6"><path d="M0 .5h8L4 5.500z" fill="#666" /></svg>
            </div>
          </div>
        </div>
        <div className="flex h-[26px] items-center">
          <div className="flex w-[76px] justify-end"><Fit w={71}>Bar Width:</Fit></div>
          <div className="ml-[4px] flex h-[26px] w-[78px] rounded-[4px] border border-[#aaa7a2] bg-white">
            <div className="flex w-[63px] items-center pl-[5px]">4</div>
            <div className="flex flex-1 items-center justify-center rounded-r-[3px] border-l border-[#bbb8b4] bg-[#f7f6f5]">
              <svg width="6" height="14" viewBox="0 0 6 14"><path d="M0 3.500h6L3 .5zM0 10.500h6l-3 3z" fill="#666" /></svg>
            </div>
          </div>
        </div>
      </div>
      <Header title="Node Shapes" w={91} check={false} />
      <Header title="Branch Labels" w={98} check={false} />
      <Header title="Scale Bar" w={64} check />
      <Header title="Scale Axis" w={67} check={false} />
      <Header title="Legend" w={53} check={false} />
      <div className="mx-[3px] mt-[2px] h-[2px] border-t border-[#cfcfd2] bg-white" />
    </div>
  );
}

function VScroll({ gripTop }: { gripTop: string }) {
  return (
    <div className="flex w-[13px] shrink-0 flex-col items-center border-l border-[#b0ada9] bg-[#f2f1f0]">
      <div className="flex h-[14px] w-full items-center justify-center rounded-t-full border border-[#c0bdb8]">
        <svg width="6" height="4" viewBox="0 0 6 4"><path d="M0 4h6L3 0z" fill="#666" /></svg>
      </div>
      <div className="w-full flex-1 rounded-full border border-[#a9a6a2] bg-linear-to-r from-white to-[#e9e8e6]">
        <div className={`mx-auto h-[7px] w-[4px] border-y border-[#999] pt-[2px] ${gripTop}`}><div className="h-px bg-[#999]" /></div>
      </div>
      <div className="flex h-[14px] w-full items-center justify-center rounded-b-full border border-[#c0bdb8]">
        <svg width="6" height="4" viewBox="0 0 6 4"><path d="M0 0h6L3 4z" fill="#666" /></svg>
      </div>
    </div>
  );
}

function HScroll() {
  return (
    <div className="flex h-[13px] w-[1616px] items-center">
      <div className="flex h-full w-[14px] items-center justify-center rounded-l-full border border-[#c0bdb8]">
        <svg width="4" height="6" viewBox="0 0 4 6"><path d="M4 0v6L0 3z" fill="#666" /></svg>
      </div>
      <div className="flex h-full flex-1 items-center justify-center rounded-full border border-[#a9a6a2] bg-linear-to-b from-white to-[#e4e2e0]">
        <div className="h-[4px] w-[7px] border-x border-[#999] px-[2px]"><div className="h-full w-px bg-[#999]" /></div>
      </div>
      <div className="flex h-full w-[14px] items-center justify-center rounded-r-full border border-[#c0bdb8]">
        <svg width="4" height="6" viewBox="0 0 4 6"><path d="M0 0v6l4-3z" fill="#666" /></svg>
      </div>
    </div>
  );
}

function Mnemonic({ text, w, plain, gap }: { text: string; w: number; plain?: boolean; gap: string }) {
  const box = useRef<HTMLSpanElement>(null);
  useLayoutEffect(() => {
    const el = box.current;
    if (!el) return;
    el.style.letterSpacing = "0px";
    el.style.letterSpacing = `${(w - el.getBoundingClientRect().width) / text.length}px`;
  }, [w, text]);
  return (
    <span ref={box} className={`inline-block ${gap}`}>
      {plain ? text : <><span className="underline underline-offset-2">{text[0]}</span>{text.slice(1)}</>}
    </span>
  );
}

function TitleBar() {
  return (
    <header className="flex h-[24px] items-center bg-linear-to-b from-[#5d5a50] to-[#3e3d38] text-[#dfdbd2]">
      <Fit w={622} className="mb-[2px] ml-[6px] text-[15px] leading-[22px] font-bold">
        FigTree v1.4.2 - dated_goats_and_tur_four-partitions_RLN_combined_annotated.trees
      </Fit>
      <svg width="18" height="18" viewBox="0 0 18 18" className="ml-auto">
        <path d="M5 1l4.500 5H6.500v8h-3V6H.5zM13 17.500l4.500-5h-3V4.500h-3v8h-3z" fill="#dfdbd2" />
      </svg>
      <div className="ml-[14px] flex h-[20px] w-[20px] items-center justify-center rounded-[2px] bg-[#dfdbd2] text-[13px] text-[#3c3b37]">Ie</div>
      <svg width="20" height="18" viewBox="0 0 20 18" className="ml-[12px]">
        <path d="M0 6.500h3L7.500 3v12L3 11.500H0z" fill="#dfdbd2" />
        <path d="M10 6q2 3 0 6" fill="none" stroke="#dfdbd2" strokeWidth="1.500" />
        <path d="M13 4q3.500 5 0 10M15.500 2q5 7 0 14" fill="none" stroke="#928e84" strokeWidth="1.500" />
      </svg>
      <Fit w={121} className="mb-px ml-[13px] text-[15px] leading-[22px]">Mon Aug 22 18:10</Fit>
      <svg width="18" height="18" viewBox="0 0 18 18" className="mr-[14px] ml-[11px]">
        <path d="M6 4.800a5.200 5.200 0 1 0 6 0" fill="none" stroke="#dfdbd2" strokeWidth="2" />
        <path d="M9 1v7M1 9h3M14 9h3M3.200 3.200l2 2M12.800 5.200l2-2M3.200 14.800l2-2M12.800 12.800l2 2M9 14v3" stroke="#dfdbd2" strokeWidth="2" />
      </svg>
    </header>
  );
}

export default function App() {
  return (
    <div className="h-[1080px] w-[1927px] overflow-hidden bg-[#f2f1f0] font-['Open_Sans',sans-serif]">
      <TitleBar />
      <div className="flex h-[1056px]">
        <Launcher />
        <main className="flex min-w-0 flex-1 flex-col">
          <nav className="flex h-[21px] shrink-0 items-center bg-[#3c3b37] pb-px text-[15px] leading-[20px] font-light text-[#eeeae0]">
            <Mnemonic text="File" w={24} gap="ml-[5px]" />
            <Mnemonic text="Edit" w={27} gap="ml-[9px]" />
            <Mnemonic text="Tree" w={33} plain gap="ml-[9px]" />
            <Mnemonic text="Help" w={33} gap="ml-[8px]" />
          </nav>
          <Toolbar />
          <div className="flex h-[948px] shrink-0 border-b-2 border-[#56534f]">
            <SidePanel />
            <VScroll gripTop="mt-[454px]" />
            <div className="flex w-[8px] shrink-0 items-center justify-center border-l-2 border-[#8f8c88] bg-[#f2f1f0]">
              <div className="h-[7px] w-[4px] border-y border-[#b5b2ae] pt-[2px]"><div className="h-px bg-[#b5b2ae]" /></div>
            </div>
            <div className="flex flex-col">
              <div className="flex h-[933px]">
                <div className="h-[933px] w-[1616px] overflow-hidden border border-r-0 border-[#b5b2ad] bg-white">
                  <TreeDrawing />
                </div>
                <VScroll gripTop="mt-[446px]" />
              </div>
              <HScroll />
            </div>
          </div>
          <footer className="flex-1 bg-[#f2f1f0]" />
        </main>
        <NextMonitor />
      </div>
    </div>
  );
}
